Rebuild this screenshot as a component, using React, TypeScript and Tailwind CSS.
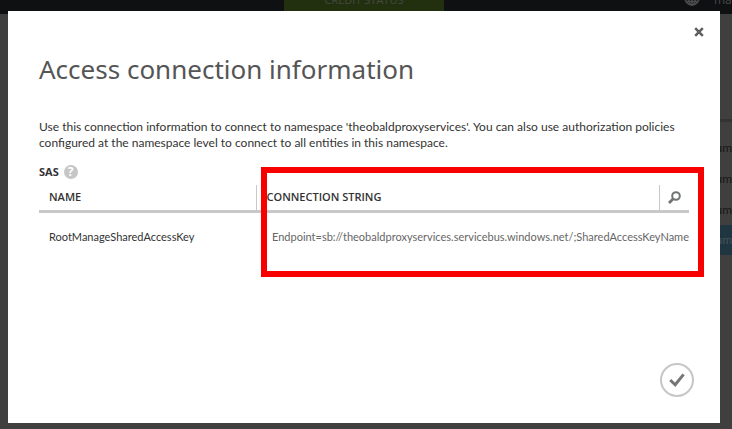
import React from "react";

const regions = ["um", "um", "um"];

function Backdrop() {
  return (
    <div className="flex min-h-screen flex-col bg-[#3f3f3f]" aria-hidden="true">
      <header className="grid h-[14px] grid-cols-[284px_160px_1fr] grid-rows-[14px] overflow-hidden bg-[#0f1012]">
        <div />
        <div className="flex items-end justify-center bg-[#233010] text-[11px] leading-[18px] text-[#444840]">
          <span className="pb-[5px]">CREDIT STATUS</span>
        </div>
        <div className="flex items-end justify-end gap-[14px] text-[12px] leading-[18px] text-[#494949]">
          <svg width="16" height="16" viewBox="0 0 16 16" className="mb-[8px] shrink-0" fill="none" stroke="#4d4d4d" strokeWidth="1.5">
            <circle cx="8" cy="8" r="7" />
            <ellipse cx="8" cy="8" rx="3.4" ry="7" />
            <path d="M8 1v14M1 8h14M2 4.5h12M2 11.5h12" />
          </svg>
          <span className="w-[18px] overflow-hidden pb-[5px]">ma.</span>
        </div>
      </header>
      <div className="flex flex-1 justify-end">
        <div className="mt-[105px] w-[12px] overflow-hidden font-['Lato',sans-serif] text-[12px] text-[#171717]">
          <div className="h-[3px] bg-[#333]" />
          <div className="pt-[10px]">
            {regions.map((name, i) => (
              <div key={i} className="flex h-[31px] items-center justify-end">{name}</div>
            ))}
          </div>
          <div className="flex h-[30px] items-center justify-end bg-[#1f3640] text-[#45545a]">um</div>
        </div>
      </div>
    </div>
  );
}

export default function App() {
  return (
    <div className="relative overflow-hidden font-['Open_Sans',sans-serif]">
      <Backdrop />
      <div className="absolute inset-0 flex pt-[11px] pr-[12px] pb-[6px] pl-[8px]">
        <section role="dialog" aria-labelledby="title" className="flex flex-1 flex-col bg-white pr-[31px] pl-[31px] text-[12px] text-[#333]">
          <div className="-mr-[19px] flex h-[42px] items-center justify-end">
            <button type="button" aria-label="Close" className="flex size-[18px] items-center justify-center">
              <svg width="10" height="10" viewBox="0 0 10 10" stroke="#5f5f5f" strokeWidth="2.6">
                <path d="M1.2 1.2l7.6 7.6M8.8 1.2L1.2 8.8" />
              </svg>
            </button>
          </div>
          <h1 id="title" className="font-['Noto_Sans',sans-serif] text-[26px] leading-[32px] text-[#555]">
            Access connection information
          </h1>
          <p className="mt-[34px] font-['Lato',sans-serif] text-[12px] leading-[16px]">
            Use this connection information to connect to namespace 'theobaldproxyservices'. You can also use authorization policies configured at the namespace level to connect to all entities in this namespace.
          </p>
          <div className="mt-[13px] flex h-[16px] items-center gap-[5px]">
            <h2 className="text-[11px] font-bold">SAS</h2>
            <button type="button" aria-label="Help" className="flex size-[14px] items-center justify-center rounded-full bg-[#c6c6c6] text-[12px] leading-[14px] font-bold text-white">
              ?
            </button>
          </div>
          <div className="relative mt-[5px]">
            <table className="w-full table-fixed border-collapse text-left text-[11px]">
              <colgroup>
                <col className="w-[217px]" />
                <col />
                <col className="w-[30px]" />
              </colgroup>
              <thead>
                <tr className="h-[26px] border-b-[3px] border-[#c8c8c8]">
                  <th className="border-r border-[#c8c8c8] px-[10px] py-0 font-semibold">NAME</th>
                  <th className="border-r border-[#c8c8c8] px-[10px] py-0 font-semibold">CONNECTION STRING</th>
                  <th className="p-0">
                    <button type="button" aria-label="Search" className="ml-[8px] flex">
                      <svg width="13" height="13" viewBox="0 0 13 13" fill="none" stroke="#707274">
                        <circle cx="8" cy="5" r="3.8" strokeWidth="2" />
                        <path d="M5.2 7.8L1 12" strokeWidth="2.8" />
                      </svg>
                    </button>
                  </th>
                </tr>
              </thead>
              <tbody className="font-['Lato',sans-serif]">
                <tr className="h-[50px]">
                  <td className="px-[10px] py-0">RootManageSharedAccessKey</td>
                  <td colSpan={2} className="py-0 pr-0 pl-[16px]">
                    <input
                      readOnly
                      aria-label="Connection string"
                      className="block w-full text-[#666] outline-none"
                      value="Endpoint=sb://theobaldproxyservices.servicebus.windows.net/;SharedAccessKeyName"
                    />
                  </td>
                </tr>
              </tbody>
            </table>
            <div className="pointer-events-none absolute -top-[18px] -right-[15px] left-[222px] h-[110px] border-[6px] border-[#f80000]" />
          </div>
          <div className="-mr-[5px] mt-auto mb-[26px] flex justify-end">
            <button type="button" aria-label="OK" className="flex size-[34px] items-center justify-center rounded-full border-2 border-[#c6c6c6]">
              <svg width="16" height="14" viewBox="0 0 16 14" fill="none" stroke="#777" strokeWidth="3">
                <path d="M1.2 7l5 4.8L14.6 1.4" />
              </svg>
            </button>
          </div>
        </section>
      </div>
    </div>
  );
}
